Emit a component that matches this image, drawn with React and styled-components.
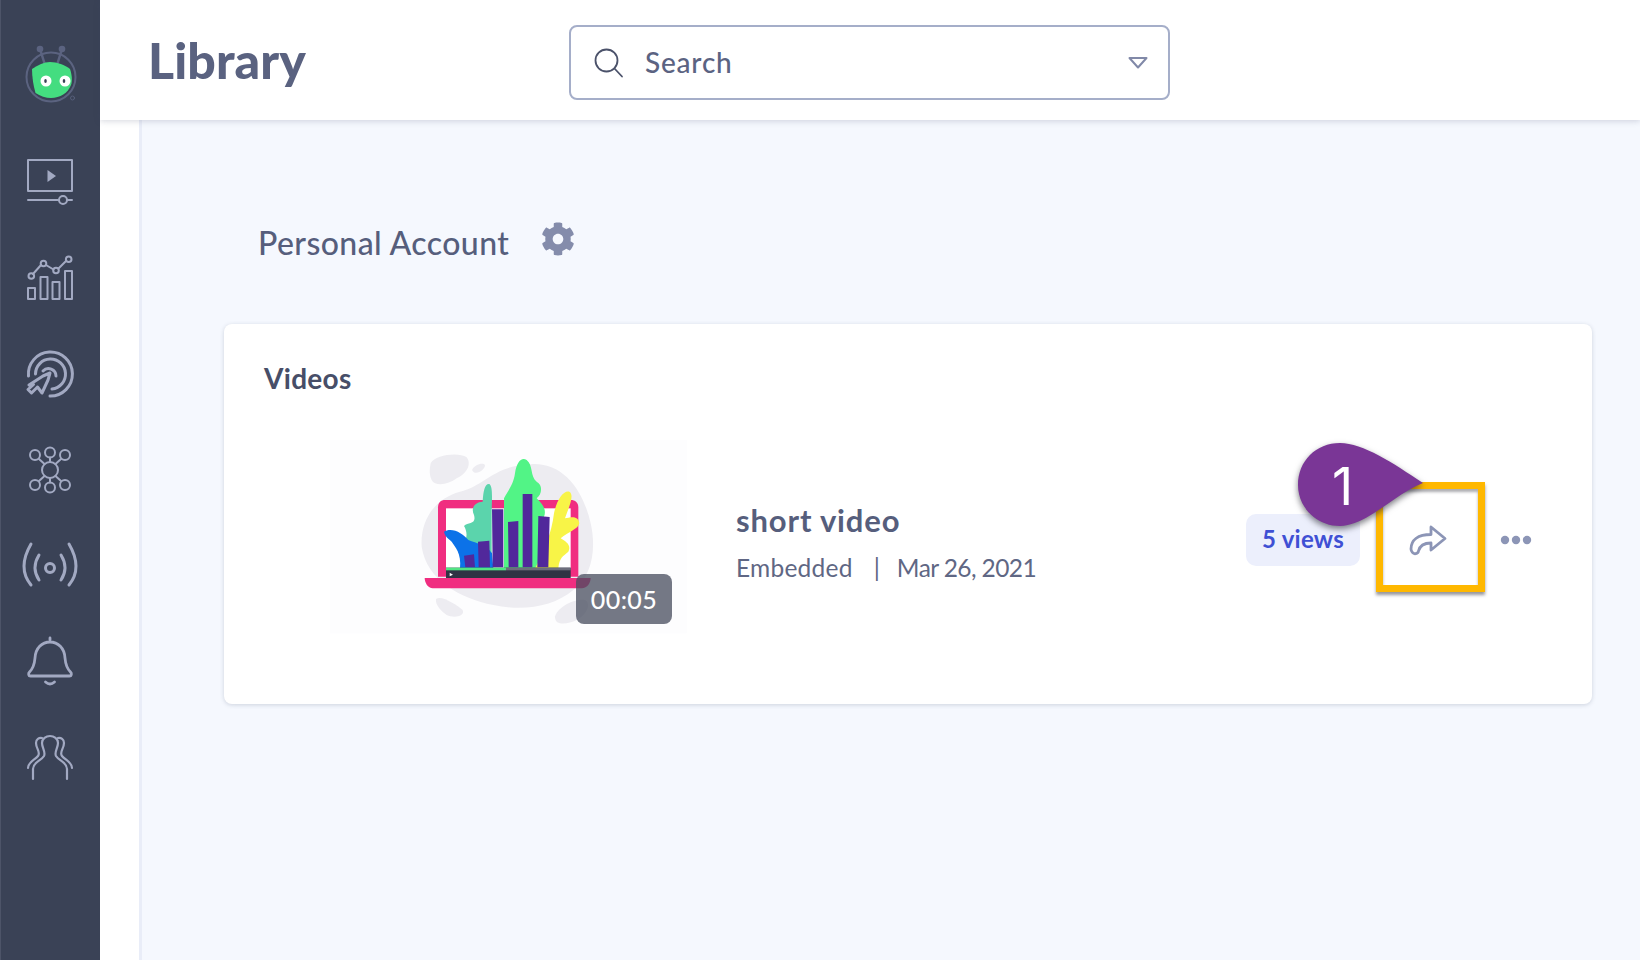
import React from "react";
import styled, { createGlobalStyle } from "styled-components";

const Global = createGlobalStyle`
  html, body { margin: 0; padding: 0; height: 100%; background: #fff; overflow: hidden; }
  body { font-family: Lato, "Open Sans", "Liberation Sans", sans-serif; }
`;
const Page = styled.div`display: flex; width: 1640px; height: 960px; overflow: hidden;`;
const Sidebar = styled.nav`
  width: 100px; flex: none; background: #3a4256; border-left: 1px solid #4d5468; box-sizing: border-box;
  display: flex; flex-direction: column; align-items: center; padding-top: 41px;
`;
const NavIcon = styled.svg`display: block; width: 100px; height: ${p => p.$h}px; margin-left: -1px; flex: none;
  margin-top: ${p => p.$mt || 0}px; margin-bottom: ${p => p.$mb || 0}px; overflow: visible;
  fill: none; stroke: #a2a9c2; stroke-width: 2; stroke-linecap: round; stroke-linejoin: round;`;
const Main = styled.div`flex: 1; display: flex; flex-direction: column; min-width: 0; position: relative;`;
const Header = styled.header`
  height: 120px; flex: none; background: #fff; display: flex; align-items: center; position: relative; z-index: 2;
  box-shadow: 0 1px 6px rgba(60, 70, 100, .22);
`;
const Title = styled.h1`
  margin: 0 0 0 48px; width: 421px; font-size: 50px; line-height: 60px; font-weight: 900; color: #5a6280; letter-spacing: .1px;
`;
const Search = styled.div`
  width: 601px; height: 75px; box-sizing: border-box; border: 2px solid #a5aec9; border-radius: 8px;
  display: flex; align-items: center; padding: 0 20px 0 22px; margin-top: 7px; margin-bottom: 2px;
`;
const SearchText = styled.span`flex: 1; margin-left: 20px; margin-top: -2px; font-size: 28px; font-weight: 500; color: #5b6382; letter-spacing: .8px;`;
const Body = styled.div`flex: 1; display: flex; background: #fff; padding-left: 39px; min-height: 0;`;
const Panel = styled.main`
  flex: 1; background: #f5f8fe; border-left: 3px solid #e9edf8; padding: 103px 48px 0 82px;
  display: flex; flex-direction: column; min-width: 0;
`;
const AccountRow = styled.div`display: flex; align-items: center; padding-left: 34px; height: 38px;`;
const AccountName = styled.h2`margin: 0; font-size: 32px; font-weight: 500; color: #565e7c; letter-spacing: .42px;`;
const Gear = styled.svg`width: 34px; height: 34px; margin-left: 32px; margin-top: -6px; fill: #848cab;`;
const Card = styled.section`
  position: relative; margin-top: 63px; height: 380px; box-sizing: border-box; background: #fff; border-radius: 8px;
  box-shadow: 0 1px 4px rgba(70, 80, 110, .22); padding: 38px 40px 0 40px;
`;
const CardTitle = styled.h3`margin: 0; font-size: 28px; line-height: 32px; font-weight: 700; color: #474e68; letter-spacing: .3px;`;
const VideoRow = styled.div`display: flex; align-items: flex-start; margin-top: 26px;`;
const Thumb = styled.div`position: relative; width: 370px; height: 220px; margin-left: 56px; flex: none;`;
const ThumbArt = styled.svg`display: block; width: 370px; height: 220px;`;
const Duration = styled.span`
  position: absolute; left: 256px; top: 154px; width: 96px; height: 50px; border-radius: 8px; background: rgba(72, 77, 95, .76);
  color: #fff; font-size: 25px; font-weight: 500; display: flex; align-items: center; justify-content: center; letter-spacing: .4px;
`;
const Info = styled.div`margin-left: 46px; padding-top: 81px; width: 510px; flex: none;`;
const VideoName = styled.div`font-size: 31px; line-height: 38px; font-weight: 700; color: #565e7c; letter-spacing: .85px;`;
const Meta = styled.div`margin-top: 14px; font-size: 24.5px; line-height: 30px; color: #5f6784; display: flex; gap: 21px;`;
const MetaKind = styled.span`letter-spacing: .25px;`;
const MetaDate = styled.span`margin-left: -4px; letter-spacing: -.6px;`;
const Actions = styled.div`display: flex; align-items: center; height: 52px; margin-top: 94px;`;
const Views = styled.span`
  width: 114px; height: 52px; flex: none; border-radius: 10px; background: #eceffc; color: #3f50d4; font-size: 24px; font-weight: 700;
  display: flex; align-items: center; justify-content: center; letter-spacing: .25px; padding-bottom: 3px; box-sizing: border-box;
`;
const ShareBtn = styled.svg`width: 38px; height: 34px; margin-left: 49px; flex: none; fill: none; stroke: #8c95b6; stroke-width: 2.8; stroke-linejoin: round; stroke-linecap: round;`;
const Dots = styled.svg`width: 32px; height: 10px; margin-left: 53px; flex: none; fill: #8c95b6;`;
const Highlight = styled.div`
  position: absolute; left: 1152px; top: 158px; width: 109px; height: 110px; box-sizing: border-box;
  border: 7px solid #ffb800; box-shadow: 0 3px 3px rgba(50, 50, 60, .5), inset 0 3px 3px rgba(50, 50, 60, .4);
`;
const Callout = styled.div`
  position: absolute; left: 1074px; top: 119px; width: 130px; height: 84px; color: #fff;
  display: flex; align-items: center; font-size: 52px; line-height: 1; font-family: Inter, "Liberation Sans", Arial, sans-serif;
`;
const CalloutShape = styled.svg`position: absolute; left: 0; top: 0; width: 130px; height: 84px; overflow: visible;
  filter: drop-shadow(0 3px 3px rgba(40, 40, 50, .6));`;
const CalloutNum = styled.span`position: relative; left: 34px; top: 2px;`;

const Logo = () => (
  <NavIcon $h={72} viewBox="0 0 100 72">
    <circle cx="51" cy="36" r="24.5" stroke="#5b6380" />
    <path d="M40 8 L45 24 M62 8 L57 24" stroke="#5b6380" strokeWidth="2.5" />
    <circle cx="40" cy="8" r="3.3" fill="#5b6380" stroke="none" />
    <circle cx="62" cy="8" r="3.3" fill="#5b6380" stroke="none" />
    <path d="M32 28 C38 24 44 21 50 21 C57 21 65 24 70 28 C72 34 72.500 40 71 44 C68 52 60 57 51 57 C46 57 40 55 35.500 52 C33.500 45 32 36 32 28Z" fill="#44dd80" stroke="none" />
    <circle cx="46" cy="40" r="5.500" fill="#fff" stroke="none" />
    <circle cx="65" cy="40" r="5.500" fill="#fff" stroke="none" />
    <ellipse cx="45.500" cy="40" rx="1.300" ry="2" fill="#3a4256" stroke="none" />
    <ellipse cx="64" cy="40" rx="1.300" ry="2" fill="#3a4256" stroke="none" />
    <circle cx="72.500" cy="57" r="2" stroke="#5b6380" strokeWidth=".8" />
  </NavIcon>
);

const nav = [
  { h: 50, mt: 44, mb: 52, g: <g><rect x="28" y="3" width="44" height="31" /><path d="M47.500 13 L56 19 L47.500 25Z" fill="#a2a9c2" stroke="none" /><path d="M28 43 H59 M67 43 H72" /><circle cx="63" cy="43" r="4" /></g> },
  { h: 42, mb: 49, g: <g><rect x="28" y="29" width="7" height="11" /><rect x="40.500" y="18" width="7" height="22" /><rect x="52.500" y="23" width="7" height="17" /><rect x="65" y="12" width="7" height="28" /><path d="M33 15 L41 6 M46 6 L53.500 10.500 M58.500 9.500 L66 2" /><circle cx="31.300" cy="17" r="2.800" /><circle cx="43.500" cy="4.500" r="2.800" /><circle cx="56" cy="11.500" r="2.800" /><circle cx="68.700" cy="0.200" r="2.800" /></g> },
  { h: 48, mb: 47, g: <g strokeWidth="3"><path d="M28.500 26 A22 22 0 1 1 50 46" /><path d="M35.500 24 A15 15 0 1 1 52 39" /><path d="M43 21 A7.500 7.500 0 0 1 56 26" /><path d="M29 35 L43 26 L50 23 L48 30 L42 43 L37.500 37 L31.500 43 L28 39.500 L33.500 34.500Z" fill="#3a4256" /></g> },
  { h: 50, mb: 47, g: <g><circle cx="50" cy="25" r="8" /><circle cx="35" cy="10" r="5" /><circle cx="50" cy="7.500" r="5" /><circle cx="65" cy="10" r="5" /><circle cx="35" cy="40" r="5" /><circle cx="50" cy="42.500" r="5" /><circle cx="65" cy="40" r="5" /><path d="M39 14 L44.500 19 M50 12.500 V17 M61 14 L55.500 19 M39 36 L44.500 31 M50 33 V37.500 M61 36 L55.500 31" /></g> },
  { h: 46, mb: 47, g: <g strokeWidth="3"><circle cx="50" cy="26" r="4.500" /><path d="M39 13 Q31 26 39 38 M61 13 Q69 26 61 38" /><path d="M31 2 Q17 26 31 43 M69 2 Q83 26 69 43" /></g> },
  { h: 52, mb: 48, g: <g strokeWidth="2.800"><path d="M50 3 V5 M30.500 41 H69.500 C71.500 41 72 38.500 70.500 37 C66.500 33 65.500 29 65 23 C64.500 13 58 7 50 7 C42 7 35.500 13 35 23 C34.500 29 33.500 33 29.500 37 C28 38.500 28.500 41 30.500 41Z" /><path d="M45.500 47 Q50 51 54.500 47" /></g> },
  { h: 48, g: <g strokeWidth="2.200"><path d="M33 44 V34 C33 27 41 26 44 21 C46 17 42 13 42 8 C42 3.500 46 1 50 1 C54 1 58 3.500 58 8 C58 13 54 17 56 21 C59 26 67 27 67 34 V44" /><path d="M28 33 C28 27 35 25 38 21 C41 17 36 14 36 8 C36 4 39 2.500 42 3 M72 33 C72 27 65 25 62 21 C59 17 64 14 64 8 C64 4 61 2.500 58 3" /></g> },
];

const Art = () => (
  <ThumbArt viewBox="0 0 1110 660">
    <rect x="30" y="60" width="1070" height="580" fill="#fdfdfe" />
    <path d="M305 380 C300 300 345 235 420 215 C500 195 520 135 640 132 C730 130 790 210 812 310 C830 390 815 470 760 510 C700 560 610 575 520 555 C420 535 320 480 305 380Z" fill="#edecf1" />
    <path d="M332 130 C345 105 415 95 440 112 C458 135 435 165 410 175 C385 195 345 200 335 180 C328 165 328 150 332 130Z" fill="#edecf1" />
    <path d="M456 150 C462 135 490 125 495 136 C495 150 465 170 456 150Z" fill="#edecf1" />
    <path d="M348 537 C365 525 410 555 428 570 C436 590 400 595 380 585 C365 575 345 555 348 537Z" fill="#edecf1" />
    <path d="M705 590 C710 565 760 535 795 540 C815 550 800 585 770 600 C745 612 705 620 705 590Z" fill="#edecf1" />
    <path d="M354 470 V262 C354 248 362 240 376 240 H752 C766 240 775 248 775 262 V470Z" fill="#f02d80" />
    <rect x="378" y="265" width="374" height="180" fill="#fff" />
    <path d="M432 445 C445 400 420 395 430 365 C445 355 440 330 432 318 C445 305 470 315 462 285 C450 260 470 245 488 245 C490 210 495 190 508 192 C520 200 515 240 515 290 L515 445Z" fill="#5bd4ac" />
    <path d="M372 335 C395 320 430 340 445 360 C470 370 500 375 516 400 L520 445 H420 C425 400 405 380 395 365 C385 355 375 350 372 335Z" fill="#0c72e8" />
    <path d="M552 445 V235 C565 210 580 195 585 160 C590 125 605 110 620 120 C640 135 630 170 650 185 C670 195 665 225 650 235 C670 255 680 270 672 290 L672 445Z" fill="#52f486" />
    <path d="M645 445 C670 400 695 340 702 280 C710 240 730 210 748 215 C765 225 745 265 735 295 C750 292 775 285 778 310 C775 328 745 335 722 355 C738 365 755 375 745 395 C730 408 718 412 715 445Z" fill="#f8f447" />
    <path d="M432 407 L462 403 L465 442 H436Z M474 365 L508 362 L510 442 H476Z M516 268 H550 V442 H518Z M564 306 L595 303 V442 H566Z M608 222 H637 V442 H608Z M655 288 L689 291 L685 442 H652Z" fill="#51289b" />
    <rect x="378" y="443" width="374" height="31" fill="#2f3344" />
    <rect x="378" y="443" width="180" height="8" fill="#52e483" />
    <rect x="558" y="443" width="194" height="8" fill="#6d6e7c" />
    <path d="M389 458 L399 464 L389 469Z" fill="#fff" />
    <path d="M314 474 H812 C812 488 802 505 785 505 H338 C324 505 314 488 314 474Z" fill="#f02d80" />
  </ThumbArt>
);

export default function App() {
  return (
    <Page>
      <Global />
      <Sidebar>
        <Logo />
        {nav.map(({ g, h, mt, mb }, i) => (
          <NavIcon key={i} $h={h} $mt={mt} $mb={mb} viewBox={`0 0 100 ${h}`}>{g}</NavIcon>
        ))}
      </Sidebar>
      <Main>
        <Header>
          <Title>Library</Title>
          <Search>
            <svg width="32" height="32" viewBox="0 0 32 32" fill="none" stroke="#4b526a" strokeWidth="1.800" strokeLinecap="round">
              <circle cx="13.500" cy="13.500" r="11" /><path d="M21.500 21.500 L29 29.500" />
            </svg>
            <SearchText>Search</SearchText>
            <svg width="20" height="14" viewBox="0 0 20 14" fill="none" stroke="#8189a8" strokeWidth="2" strokeLinejoin="round">
              <path d="M1.500 2 H18.500 L10 11.500Z" />
            </svg>
          </Search>
        </Header>
        <Body>
          <Panel>
            <AccountRow>
              <AccountName>Personal Account</AccountName>
              <Gear viewBox="0 0 512 512">
                <path d="M487.4 315.700l-42.600-24.600c4.300-23.200 4.300-47 0-70.200l42.600-24.600c4.900-2.800 7.100-8.600 5.500-14-11.100-35.600-30-67.800-54.700-94.600-3.800-4.100-10-5.100-14.800-2.300L380.800 110c-17.900-15.400-38.500-27.300-60.800-35.100V25.800c0-5.600-3.900-10.500-9.400-11.700-36.700-8.200-74.300-7.800-109.200 0-5.500 1.200-9.400 6.100-9.400 11.700V75c-22.200 7.900-42.800 19.800-60.800 35.100L88.700 85.500c-4.900-2.800-11-1.900-14.800 2.300-24.700 26.700-43.600 58.900-54.700 94.600-1.700 5.400.6 11.200 5.500 14L67.300 221c-4.300 23.200-4.300 47 0 70.200l-42.600 24.600c-4.900 2.800-7.100 8.600-5.500 14 11.100 35.600 30 67.800 54.700 94.600 3.800 4.100 10 5.100 14.800 2.300l42.600-24.600c17.900 15.400 38.500 27.300 60.800 35.100v49.200c0 5.600 3.900 10.500 9.400 11.700 36.700 8.200 74.300 7.800 109.200 0 5.500-1.200 9.400-6.100 9.400-11.700v-49.200c22.200-7.900 42.800-19.800 60.800-35.100l42.600 24.600c4.900 2.800 11 1.900 14.800-2.300 24.700-26.700 43.600-58.900 54.700-94.600 1.500-5.500-.7-11.300-5.600-14.100zM256 336c-44.100 0-80-35.900-80-80s35.900-80 80-80 80 35.900 80 80-35.900 80-80 80z" />
              </Gear>
            </AccountRow>
            <Card>
              <CardTitle>Videos</CardTitle>
              <VideoRow>
                <Thumb>
                  <Art />
                  <Duration>00:05</Duration>
                </Thumb>
                <Info>
                  <VideoName>short video</VideoName>
                  <Meta><MetaKind>Embedded</MetaKind><span>|</span><MetaDate>Mar 26, 2021</MetaDate></Meta>
                </Info>
                <Actions>
                  <Views>5 views</Views>
                  <ShareBtn viewBox="0 0 38 34">
                    <path d="M2 26 C2 17 9 11.500 22 11.500 V4 L36 15.500 L22 27 V20 C15 20 11 22 9.500 28 C9 31 5 31.500 3.500 29.500 C2.500 28.500 2 27.500 2 26Z" />
                  </ShareBtn>
                  <Dots viewBox="0 0 32 10"><circle cx="5" cy="5" r="4.200" /><circle cx="16" cy="5" r="4.200" /><circle cx="27" cy="5" r="4.200" /></Dots>
                </Actions>
              </VideoRow>
              <Highlight />
              <Callout>
                <CalloutShape viewBox="0 0 130 84">
                  <path d="M42 0 C65 0 95 20 125 40 C95 52 70 82 42 83 C18 83 0 64 0 42 C0 18 18 0 42 0Z" fill="#7a3696" />
                </CalloutShape>
                <CalloutNum>1</CalloutNum>
              </Callout>
            </Card>
          </Panel>
        </Body>
      </Main>
    </Page>
  );
}
